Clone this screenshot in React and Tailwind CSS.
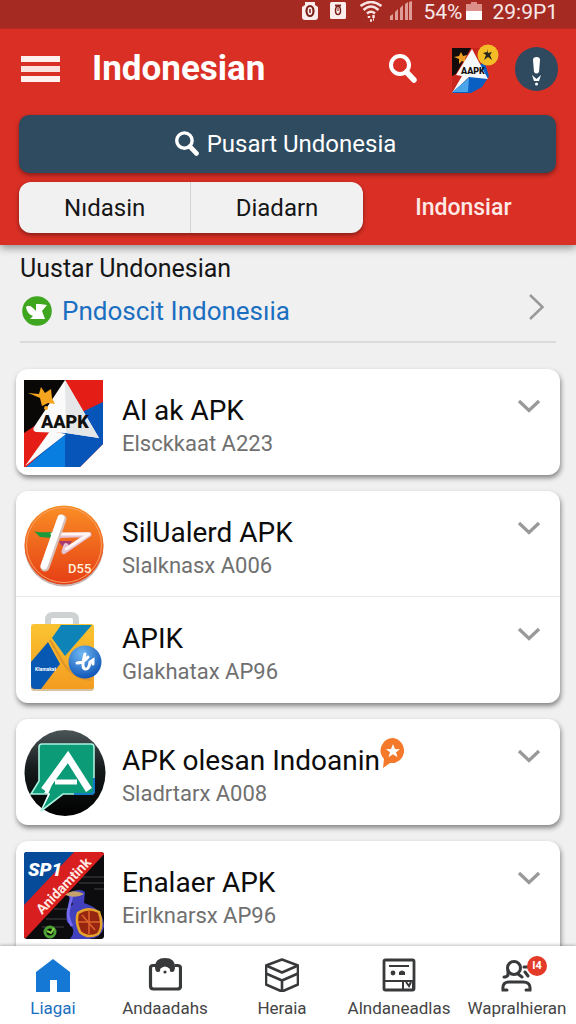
import { useState } from 'react';

function SearchIcon({ className }) {
  return (
    <svg viewBox="0 0 28 30" className={className} fill="none" stroke="currentColor" aria-hidden="true">
      <circle cx="11" cy="11" r="9" strokeWidth="4" />
      <path d="M17.5 18l7.500 8" strokeWidth="5.500" strokeLinecap="round" />
    </svg>
  );
}

function ChevronDown() {
  return (
    <svg viewBox="0 0 24 16" className="w-6 h-4" fill="none" stroke="#999999" strokeWidth="3.200" aria-hidden="true">
      <path d="M2 3l10 9.500L22 3" />
    </svg>
  );
}

function StatusBar() {
  return (
    <div className="flex h-7 items-center justify-end bg-[#a52a22] pr-[18px] pb-1 text-white/90">
      <svg viewBox="0 0 18 20" className="mr-2.5 h-5 w-[18px]" aria-hidden="true">
        <path d="M4 3V0h10v3l3 2v10q0 3-3 3H4q-3 0-3-3V5z" fill="#fbeeed" />
        <ellipse cx="9" cy="9" rx="3.500" ry="5" fill="none" stroke="#7d2019" strokeWidth="2.200" />
        <path d="M9 7v4" stroke="#7d2019" strokeWidth="1.500" />
      </svg>
      <svg viewBox="0 0 18 20" className="mr-3 h-5 w-[18px]" aria-hidden="true">
        <rect x="1" y="0" width="16" height="17" rx="1.500" fill="#fbeeed" />
        <path d="M6 3.500h6" stroke="#7d2019" strokeWidth="1.800" />
        <ellipse cx="9" cy="8.500" rx="2.500" ry="4" fill="none" stroke="#7d2019" strokeWidth="1.500" />
        <path d="M9 6v3" stroke="#7d2019" />
      </svg>
      <svg viewBox="0 0 24 22" className="mr-1.5 h-[22px] w-6" fill="none" stroke="#f8e3e1" strokeWidth="2.500" aria-hidden="true">
        <path d="M1.500 5q10.500-8 21 0M4.500 9q7.500-7 15 0M8 12.500q4-3.500 8 0" />
        <path d="M10 15v2M14.500 14v3M11 19.500h2M14 18.500h1" />
      </svg>
      <svg viewBox="0 0 24 22" className="mr-2.5 h-[22px] w-6" fill="#df9b96" aria-hidden="true">
        <path d="M1 19v-4l3-2v6zM6 19v-8l3-3v11zM11 19V7l3-3v15zM16 19V3l3-2v18zM20 19V1l3-1v19z" />
      </svg>
      <span className="mr-1 text-[21px] leading-6">54%</span>
      <svg viewBox="0 0 16 20" className="mr-2.5 h-5 w-4" aria-hidden="true">
        <path d="M5 0h6v2h5v16H0V2h5z" fill="#dc8f89" />
        <path d="M0 9h16v9H0z" fill="#fff" />
      </svg>
      <span className="text-[21px] leading-6">29:9P1</span>
    </div>
  );
}

function ProfileIcon() {
  return (
    <svg viewBox="0 0 48 50" className="h-[50px] w-12" aria-hidden="true">
      <path d="M1 4h34v28L1 48z" fill="#c9241d" />
      <path d="M1 4h19L5 30l-4 2z" fill="#140c0a" />
      <path d="M3 13l5-1 2-4 2 4 4-1-2 4 2 4-5-2-3 3v-5z" fill="#ef9d24" />
      <path d="M33 17l5 15-7 11-11 6H1l16-15z" fill="#0a5fc2" />
      <path d="M21 5l16 30-19-2L1 49l10-17-6-1z" fill="#f7f8fa" />
      <path d="M1 48l17-14-1 14z" fill="#49a4ea" />
      <text x="10" y="30" fontSize="9" fontWeight="900" fill="#15110f">AAPK</text>
      <circle cx="37" cy="11" r="10.500" fill="#f4bd28" />
      <path d="M36 5l1 4 4-1-2 3 2 5-4-3-4 3 2-5-3-2 4-1z" fill="#28231c" />
    </svg>
  );
}

function AlakIcon() {
  return (
    <svg viewBox="0 0 80 90" className="h-[90px] w-20" aria-hidden="true">
      <path d="M0 1h79v64L56 88H0z" fill="#e51d17" />
      <path d="M0 1h42L12 46 0 54z" fill="#090807" />
      <path d="M79 23v42L56 88H3l38-38 17-17z" fill="#0755b8" />
      <path d="M41 56L2 88h39z" fill="#087ee0" />
      <path d="M26 52L1 87l41-32z" fill="#fafafa" />
      <path d="M41 1l34 58-33-5-30-1q-4-1-2-5z" fill="#fafafa" />
      <path d="M41 1l34 58-33-5z" fill="#e4e6e8" />
      <path d="M4 14l11 1 2-7 4 6 6-4 1 9 3 6-7-1-6 3-2-8-7-3z" fill="#f4a51d" />
      <circle cx="22" cy="29" r="2" fill="#f4a51d" />
      <text x="17" y="49" fontSize="18" fontWeight="900" fill="#111">AAPK</text>
    </svg>
  );
}

function SilIcon() {
  return (
    <svg viewBox="0 0 80 84" className="h-[84px] w-20" aria-hidden="true">
      <defs>
        <linearGradient id="orangeDisc" x1="0" y1="0" x2="0" y2="1">
          <stop offset="0" stopColor="#f98e25" />
          <stop offset="1" stopColor="#e63e15" />
        </linearGradient>
      </defs>
      <circle cx="40" cy="43" r="39.500" fill="#8c6a5f" opacity="0.5" />
      <circle cx="40" cy="41" r="39.500" fill="url(#orangeDisc)" />
      <circle cx="40" cy="41" r="37.500" fill="none" stroke="#f9a066" strokeWidth="1" />
      <path d="M10 27q3 2 20 1l-2 6-12-1z" fill="#1b9a3c" />
      <path d="M34 37h14l-6 9z" fill="#a93a70" />
      <path d="M34 31.500l31-1-25 17 2-6" fill="none" stroke="#e6c3d3" strokeWidth="5" strokeLinejoin="round" strokeLinecap="round" />
      <path d="M28 30h37L42 45" fill="none" stroke="#fff5f3" strokeWidth="3" strokeLinejoin="round" strokeLinecap="round" />
      <path d="M38 15L21 63" stroke="#d7c1ba" strokeWidth="9" strokeLinecap="round" />
      <path d="M37 14L20 62" stroke="#fff" strokeWidth="7" strokeLinecap="round" />
      <text x="44" y="69" fontSize="13" fontWeight="500" fill="#fff0dc">D55</text>
    </svg>
  );
}

function BagIcon() {
  return (
    <svg viewBox="0 0 80 82" className="h-[82px] w-20" aria-hidden="true">
      <defs>
        <linearGradient id="bag" x1="0" y1="0" x2="0" y2="1">
          <stop offset="0" stopColor="#fbc431" />
          <stop offset="1" stopColor="#f39c20" />
        </linearGradient>
        <radialGradient id="ball" cx="0.4" cy="0.25" r="0.8">
          <stop offset="0" stopColor="#6fb7f2" />
          <stop offset="1" stopColor="#0950b4" />
        </radialGradient>
      </defs>
      <path d="M24 16V9q0-5 5-5h18q5 0 5 5v7" fill="none" stroke="#cfd2d3" strokeWidth="6" />
      <rect x="7" y="15" width="63" height="65" rx="3" fill="#b28339" opacity="0.5" />
      <rect x="7" y="13" width="63" height="65" rx="3" fill="url(#bag)" />
      <path d="M37 14h31L41 45 28 27z" fill="#0e83b8" />
      <path d="M24 31l12 22-19 25h-6q-4 0-4-4V51z" fill="#0758b3" />
      <path d="M26 29l14 24q10 15 27 16" fill="none" stroke="#dd942b" strokeWidth="2" />
      <text x="11" y="60" fontSize="5" fontWeight="700" fill="#fff">Klamakat</text>
      <circle cx="61" cy="51" r="16.500" fill="url(#ball)" />
      <path d="M53 52q6 0 11-6M61 43q-4 14 0 15t5-7l3-2v4" fill="none" stroke="#fff" strokeWidth="3" strokeLinecap="round" />
    </svg>
  );
}

function ChatIcon() {
  return (
    <svg viewBox="0 0 82 88" className="h-[88px] w-[82px]" aria-hidden="true">
      <defs>
        <linearGradient id="darkDisc" x1="0" y1="0" x2="0" y2="1">
          <stop offset="0" stopColor="#4b5558" />
          <stop offset="0.45" stopColor="#151a1b" />
          <stop offset="1" stopColor="#000" />
        </linearGradient>
      </defs>
      <ellipse cx="41" cy="43" rx="40.500" ry="43" fill="url(#darkDisc)" />
      <path d="M18 14h49q3 0 3 3v44q0 3-3 3H39L17 81l8-17H7l8-13V17q0-3 3-3z" fill="#0b9b76" stroke="#a9f2df" strokeWidth="1.600" />
      <path d="M70 48v13q0 3-3 3H50" fill="none" stroke="#1479c9" strokeWidth="2" />
      <path d="M20 60l24-33 21 33" fill="none" stroke="#fff" strokeWidth="7" />
      <path d="M31 52h22" stroke="#fff" strokeWidth="5" />
      <path d="M30 50L17 81l9-17-6-1z" fill="#fff" />
      <path d="M44 37l6 7H38z" fill="#0b9b76" />
    </svg>
  );
}

function EnalaerIcon() {
  return (
    <svg viewBox="0 0 80 88" className="h-[88px] w-20" aria-hidden="true">
      <defs>
        <clipPath id="tile"><rect x="0" y="0" width="80" height="87" rx="3" /></clipPath>
      </defs>
      <g clipPath="url(#tile)">
        <path d="M0 0h80v88H0z" fill="#0c0c0e" />
        <path d="M50 25h30M55 31h25M30 57h18M22 67h22M70 37h10M18 75h22" stroke="#303034" strokeWidth="1.500" />
        <path d="M0 0h52L0 56z" fill="#064b9a" />
        <path d="M50 0h32L0 88V53z" fill="#d81e1e" />
        <path d="M43 42q12-7 18-2l-1 11q20 6 20 24-3 13-20 12H46q8-9-3-17-2-11 6-18z" fill="#4141bd" />
        <path d="M48 43l-3 13q-3 8 3 18" fill="none" stroke="#746bf0" strokeWidth="3" />
        <path d="M41 43q8-7 19-1-8 5-19 1z" fill="#c5a26a" />
        <path d="M54 61q10-7 21-1 5 14-1 22-10 5-18-2-5-11-2-19z" fill="#972611" stroke="#e6a32c" strokeWidth="2.500" />
        <path d="M54 70h22M65 59v23M58 63l13 15" stroke="#df642b" strokeWidth="1.500" />
        <circle cx="26" cy="80" r="5" fill="none" stroke="#4ca334" strokeWidth="3" />
        <path d="M23 79l4 2 3-5" stroke="#83d445" strokeWidth="2" fill="none" />
        <text x="4" y="24" fontSize="19" fontWeight="900" fontStyle="italic" fill="#fff">SP1</text>
        <text transform="translate(18 63) rotate(-46)" fontSize="14" fontWeight="700" fill="#ffe9e2">Anidamtink</text>
      </g>
    </svg>
  );
}

const groups = [
  [{ title: 'Al ak APK', sub: 'Elsckkaat A223', Icon: AlakIcon }],
  [
    { title: 'SilUalerd APK', sub: 'Slalknasx A006', Icon: SilIcon },
    { title: 'APIK', sub: 'Glakhatax AP96', Icon: BagIcon },
  ],
  [{ title: 'APK olesan Indoanin', sub: 'Sladrtarx A008', Icon: ChatIcon, starred: true }],
  [{ title: 'Enalaer APK', sub: 'Eirlknarsx AP96', Icon: EnalaerIcon }],
];

function StarBubble() {
  return (
    <svg viewBox="0 0 26 32" className="-mt-4 h-8 w-[26px]" aria-hidden="true">
      <path d="M13 1a12.500 12.500 0 1 1-3 25l-7 5 1-9A12.500 12.500 0 0 1 13 1z" fill="#f5792a" />
      <path d="M13 7l2 5 5 .3-4 3 1.500 5-4.500-3-4.500 3 1.500-5-4-3 5-.3z" fill="#fff" />
    </svg>
  );
}

function AppRow({ app }) {
  const { title, sub, Icon, starred } = app;
  return (
    <li className="flex h-[106px] items-center pt-1 pr-[19px] pl-2">
      <div className="flex w-[98px] shrink-0">
        <Icon />
      </div>
      <div className="min-w-0 flex-1 pt-1">
        <h2 className="flex items-center text-[28px] leading-9 whitespace-nowrap text-[#0c0c0c]">
          {title}
          {starred && <StarBubble />}
        </h2>
        <p className="text-[22px] leading-[30px] text-[#707070]">{sub}</p>
      </div>
      <button type="button" aria-label={`Expand ${title}`} className="mb-9">
        <ChevronDown />
      </button>
    </li>
  );
}

const navItems = [
  {
    label: 'Liagai',
    icon: <path d="M17 1l17 13v20H21V22h-7v12H0V14z" fill="#1478d4" />,
  },
  {
    label: 'Andaadahs',
    icon: (
      <g fill="none" stroke="#38393b" strokeWidth="3.200">
        <path d="M8 7.500H5Q2.500 7.500 2.500 10v18q0 3 3 3h24q3 0 3-3V10q0-2.500-3-2.500h-3" />
        <path d="M7 9q0-9 10-9t10 9q0 5-3 5t-2-3q-5-5-10 0 1 3-2 3t-3-5z" fill="#38393b" stroke="none" />
        <circle cx="17" cy="14" r="1.600" fill="#38393b" stroke="none" />
      </g>
    ),
  },
  {
    label: 'Heraia',
    icon: (
      <g fill="none" stroke="#38393b" strokeWidth="2.600" strokeLinejoin="round">
        <path d="M17 1.500l16 6v19l-16 7-16-7v-19z" />
        <path d="M1 7.500l16 7 16-7M1 15.500l16 7 16-7M17 22v11" />
      </g>
    ),
  },
  {
    label: 'Alndaneadlas',
    icon: (
      <g fill="none" stroke="#38393b" strokeWidth="2.800">
        <rect x="2" y="2" width="30" height="30" rx="1.500" />
        <path d="M7 8h20M3 23h18M21 23h10v9H21zM24 24l3 4 2-4" strokeWidth="2" />
        <circle cx="11" cy="15" r="2.400" fill="#38393b" stroke="none" />
        <path d="M17 17v-3q3-3 6 0v3z" fill="#38393b" stroke="none" />
      </g>
    ),
  },
  {
    label: 'Wapralhieran',
    badge: true,
    icon: (
      <g fill="none" stroke="#38393b" strokeWidth="3" strokeLinecap="round">
        <circle cx="14" cy="10" r="6.500" />
        <path d="M8 12v5q-1 2-4 2M18 16l4 3M24 9h3M25 14l3 4" />
        <path d="M7 32H3q-1-8 6-8h14q8 0 7 8h-4" />
      </g>
    ),
  },
];

export default function App() {
  const [tab, setTab] = useState(0);

  return (
    <div className="flex h-dvh flex-col overflow-hidden bg-[#f0f0f1] font-[Roboto,sans-serif]">
      <header className="relative z-10 shrink-0 bg-[#d92f25] shadow-[0_3px_8px_rgba(0,0,0,0.4)]">
        <StatusBar />
        <div className="flex h-[87px] items-center border-t border-[#b92921] pr-[18px] pb-[7px] pl-[21px] text-white">
          <button type="button" aria-label="Menu" className="mr-8 flex w-[39px] flex-col gap-1">
            <span className="h-1.5 w-full bg-[#fff1ee]" />
            <span className="h-1.5 w-full bg-[#fbe3df]" />
            <span className="h-1.5 w-full bg-[#fff1ee]" />
          </button>
          <h1 className="flex-1 text-[35px] leading-10 font-bold">Indonesian</h1>
          <button type="button" aria-label="Search" className="mr-[34px]">
            <SearchIcon className="h-[30px] w-7" />
          </button>
          <button type="button" aria-label="Profile" className="mr-4">
            <ProfileIcon />
          </button>
          <button type="button" aria-label="Alerts" className="rounded-full bg-[#2f4a5f]">
            <svg viewBox="0 0 43 44" className="h-11 w-[43px]" fill="#fff" aria-hidden="true">
              <path d="M18 13q0-3 3.500-3t3.500 3l-1 12q-2.500 3-5 0z" />
              <path d="M17 28l4.500 4 4.500-4-2 6h-5z" />
              <circle cx="21.500" cy="37" r="1.500" />
            </svg>
          </button>
        </div>
        <div className="pr-5 pl-[19px]">
          <button type="button" className="flex h-[58px] w-full items-center justify-center gap-2 rounded-[10px] bg-[#2e4b60] pr-1 text-2xl text-white shadow-[0_2px_4px_rgba(0,0,0,0.4)]">
            <SearchIcon className="h-[26px] w-6" />
            Pusart Undonesia
          </button>
          <div className="flex items-center pt-[9px] pb-3">
            <div className="flex h-[51px] w-[64%] rounded-xl bg-[#f1f1f2] shadow-[0_2px_4px_rgba(0,0,0,0.4)]">
              <button type="button" onClick={() => setTab(0)} aria-pressed={tab === 0} className="flex-1 border-r border-[#d2d2d4] text-2xl text-[#161616]">
                Nıdasin
              </button>
              <button type="button" onClick={() => setTab(1)} aria-pressed={tab === 1} className="flex-1 text-2xl text-[#161616]">
                Diadarn
              </button>
            </div>
            <button type="button" onClick={() => setTab(2)} aria-pressed={tab === 2} className="h-[51px] flex-1 pt-0.5 pl-2 text-[23px] font-medium text-[#ffe9e6]">
              Indonsiar
            </button>
          </div>
        </div>
      </header>

      <main className="min-h-0 flex-1 overflow-y-auto px-4 pb-4 [scrollbar-width:none]">
        <section className="mx-1 border-b-2 border-[#dcdcde] pt-2 pb-3">
          <h2 className="text-[25px] leading-8 text-[#161616]">Uustar Undonesian</h2>
          <a href="#indonesia" className="mt-2 flex items-center text-[26px] leading-9 text-[#1a6fc0]">
            <svg viewBox="0 0 30 30" className="mr-2.5 ml-0.5 h-[30px] w-[30px]" aria-hidden="true">
              <circle cx="15" cy="15" r="14.800" fill="#3fa71f" />
              <path d="M4 11q3-3 7 1l3 3V8h4l7 1-5 6 3 8H8l3-3q-6-2-7-9z" fill="#fff" />
            </svg>
            <span className="flex-1">Pndoscit Indonesıia</span>
            <svg viewBox="0 0 16 28" className="mr-[11px] -mt-2 h-7 w-4" fill="none" stroke="#999" strokeWidth="2.500" aria-hidden="true">
              <path d="M1 2l12.500 12L1 26" />
            </svg>
          </a>
        </section>

        <div className="flex flex-col gap-4 pt-[26px]">
          {groups.map((apps) => (
            <ul key={apps[0].title} className="divide-y divide-[#e8e8e8] rounded-xl bg-white shadow-[1px_3px_5px_rgba(0,0,0,0.45)] last:pb-4">
              {apps.map((app) => (
                <AppRow key={app.title} app={app} />
              ))}
            </ul>
          ))}
        </div>
      </main>

      <nav className="z-10 grid shrink-0 grid-cols-[106fr_118fr_116fr_118fr_118fr] bg-white pt-3 pb-1 shadow-[0_-1px_3px_rgba(0,0,0,0.25)]">
        {navItems.map(({ label, icon, badge }, i) => (
          <a key={label} href={`#${label}`} className={`relative flex flex-col items-center gap-1 text-[17px] leading-6 ${i === 0 ? 'text-[#1a6fc0]' : 'text-[#444]'}`}>
            <svg viewBox="0 0 34 34" className="h-[34px] w-[34px]" aria-hidden="true">{icon}</svg>
            {label}
            {badge && (
              <span className="absolute -top-0.5 left-1/2 ml-2.5 flex h-5 w-5 items-center justify-center rounded-full bg-[#e33b28] text-[11px] leading-5 font-bold text-white">
                I4
              </span>
            )}
          </a>
        ))}
      </nav>
    </div>
  );
}
